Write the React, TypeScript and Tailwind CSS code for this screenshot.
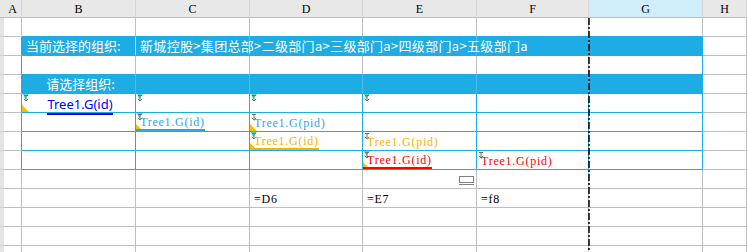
import React from "react";

const COLS = ["S", "A", "B", "C", "D", "E", "F", "G", "H"] as const;
type Col = (typeof COLS)[number];
const ROWS = Array.from({ length: 13 }, (_, i) => i + 1);

const serif = { fontFamily: '"Liberation Serif", serif' };
const cjk = { fontFamily: '"Noto Sans CJK SC", sans-serif' };

function Arrow() {
  return (
    <svg className="absolute left-[1px] top-[1px]" width="6" height="7" viewBox="0 0 6 7">
      <path d="M3 0.5 V6 M0.8 3.8 L3 6 L5.2 3.8 M1 0.5 H5" stroke="#6f6f6f" strokeWidth="1" fill="none" />
    </svg>
  );
}
function Green() {
  return (
    <svg className="absolute left-0 top-0" width="8" height="6" viewBox="0 0 8 6">
      <polygon points="1,0 7,0 3,5" fill="#3ee2c2" />
    </svg>
  );
}
function Yellow() {
  return (
    <svg className="absolute left-0 bottom-0" width="7" height="7" viewBox="0 0 7 7">
      <polygon points="0,0 0,7 7,7" fill="#f6c000" />
    </svg>
  );
}

type Marks = { a?: boolean; g?: boolean; y?: boolean };
const marks: Record<string, Marks> = {
  "5B": { a: true, g: true, y: true },
  "5C": { a: true, g: true },
  "5D": { a: true, g: true },
  "5E": { a: true, g: true },
  "6C": { a: true, g: true, y: true },
  "6D": { a: true, y: true },
  "7D": { a: true, g: true, y: true },
  "7E": { a: true },
  "8E": { a: true, g: true, y: true },
  "8F": { a: true },
};

function Formula({ text, color, under }: { text: string; color: string; under?: string }) {
  return (
    <span
      className={
        "relative z-10 whitespace-nowrap text-[12px] leading-[14px] tracking-[0.75px] pl-[4px] pt-[2px] " +
        (under ? "border-b-2 " : "")
      }
      style={{ ...serif, color, borderColor: under }}
    >
      {text}
    </span>
  );
}

function content(r: number, c: Col): React.ReactNode {
  const k = `${r}${c}`;
  switch (k) {
    case "2B":
      return (
        <span className="relative z-10 whitespace-nowrap pl-[4px] text-[13px] text-white" style={cjk}>
          当前选择的组织:
        </span>
      );
    case "2C":
      return (
        <span className="relative z-10 whitespace-nowrap pl-[4px] text-[13px] tracking-[0.32px] text-white" style={cjk}>
          新城控股&gt;集团总部&gt;二级部门a&gt;三级部门a&gt;四级部门a&gt;五级部门a
        </span>
      );
    case "4B":
      return (
        <span className="relative z-10 w-full whitespace-nowrap pl-[4px] text-center text-[13px] text-white" style={cjk}>
          请选择组织:
        </span>
      );
    case "5B":
      return (
        <span className="w-full text-center pl-[3px]">
          <span className="relative z-10 whitespace-nowrap border-b-2 border-[#0000ff] text-[13px] leading-[15px] text-[#0000ff]" style={{ fontFamily: '"Noto Sans", sans-serif' }}>
            Tree1.G(id)
          </span>
        </span>
      );
    case "6C":
      return <Formula text="Tree1.G(id)" color="#2ea6df" under="#2ea6df" />;
    case "6D":
      return <Formula text="Tree1.G(pid)" color="#2ea6df" />;
    case "7D":
      return <Formula text="Tree1.G(id)" color="#f5b400" under="#f5b400" />;
    case "7E":
      return <Formula text="Tree1.G(pid)" color="#f5b400" />;
    case "8E":
      return <Formula text="Tree1.G(id)" color="#ff0000" under="#ff0000" />;
    case "8F":
      return <Formula text="Tree1.G(pid)" color="#ff0000" />;
    case "10D":
      return <Formula text="=D6" color="#000000" />;
    case "10E":
      return <Formula text="=E7" color="#000000" />;
    case "10F":
      return <Formula text="=f8" color="#000000" />;
    case "9E":
      return (
        <svg className="absolute right-[1px] bottom-[2px]" width="16" height="10" viewBox="0 0 16 10">
          <rect x="0.5" y="0.5" width="14" height="6" fill="none" stroke="#808080" />
          <path d="M0 8.5 H15" stroke="#808080" />
        </svg>
      );
  }
  return null;
}

const inner = ["B", "C", "D", "E", "F", "G"];

function cellClass(r: number, c: Col): string {
  if (c === "S") return "bg-[#e4e4e4] border-b border-b-[#d0d0d0]";
  const isBand = (r === 2 || r === 4) && inner.includes(c);
  const bg = isBand ? "bg-[#1eace4] " : "bg-white ";
  let right = "border-r-[#bfbfbf]";
  let bottom = "border-b-[#bfbfbf]";
  if (c === "A") {
    right = r >= 2 && r <= 8 ? "border-r-[#1eace4]" : "border-r-[#bfbfbf]";
  } else if (inner.includes(c)) {
    if (r === 1) bottom = "border-b-[#1eace4]";
    if (r >= 2 && r <= 8) {
      bottom = "border-b-[#1eace4]";
      if (c === "G") right = "border-r-[#1eace4]";
      else if (r === 3) right = "border-r-[#bfbfbf]";
      else if (r === 2 && c === "B") right = "border-r-[#a8dcf2]";
      else if (r === 2 || r === 4) right = "border-r-[#4cbde9]";
      else right = "border-r-[#1eace4]";
    }
  }
  return bg + "relative flex items-center border-r border-b " + right + " " + bottom;
}

export default function App() {
  return (
    <div className="relative h-[252px] w-[747px] overflow-hidden bg-white">
      <div className="grid grid-cols-[4px_18px_114px_114px_113px_114px_112px_114px_1fr] grid-rows-[18px_repeat(13,19px)]">
        {COLS.map((c) => (
          <div
            key={"h" + c}
            className={
              (c === "G" ? "bg-[#cfeefa] " : "bg-[#e8e8e8] ") +
              "flex items-center justify-center border-b border-b-[#bdbdbd] " +
              (c === "S" ? "" : "border-r border-r-[#d6d6d6]")
            }
          >
            <span className="text-[12px] leading-none text-black" style={serif}>
              {c === "S" ? "" : c}
            </span>
          </div>
        ))}
        {ROWS.map((r) =>
          COLS.map((c) => {
            const m = marks[`${r}${c}`];
            return (
              <div key={`${r}${c}`} className={cellClass(r, c)}>
                {content(r, c)}
                {m?.g && <Green />}
                {m?.a && <Arrow />}
                {m?.y && <Yellow />}
              </div>
            );
          })
        )}
      </div>
      <svg className="absolute left-[588px] top-[18px]" width="2" height="234" viewBox="0 0 2 234">
        <line x1="1" y1="0" x2="1" y2="234" stroke="#000" strokeWidth="1.5" strokeDasharray="7 2 2 2" />
      </svg>
    </div>
  );
}
